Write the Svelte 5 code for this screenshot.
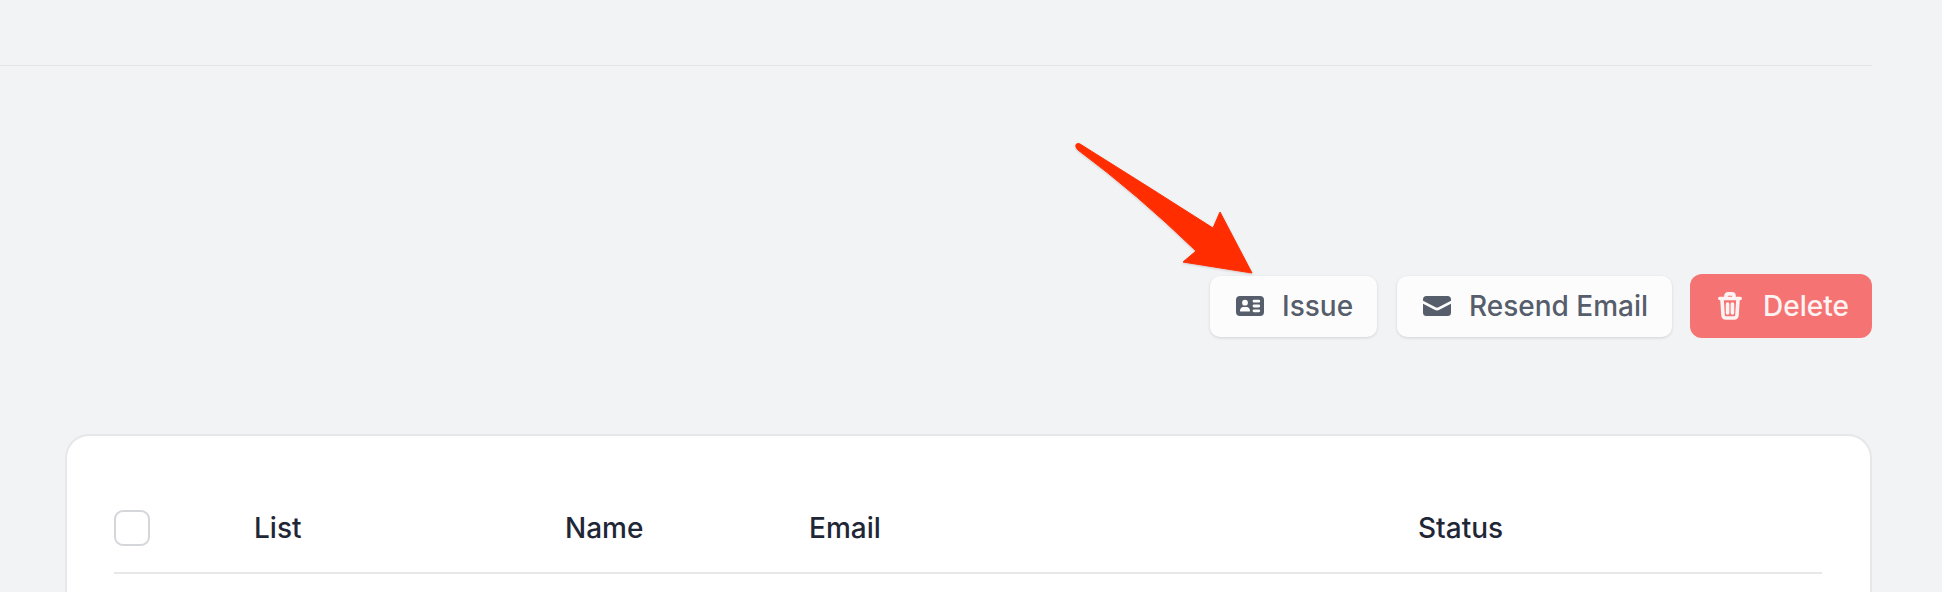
<script>
  const columns = [
    { label: 'List', width: 311 },
    { label: 'Name', width: 244 },
    { label: 'Email', width: 609 },
    { label: 'Status', width: 0 }
  ];
</script>

<div class="page">
  <div class="topbar"></div>

  <div class="actions">
    <button class="btn light issue">
      <svg class="icon" width="28" height="20" viewBox="0 0 28 20" aria-hidden="true">
        <path fill-rule="evenodd" fill="currentColor" d="M4 0h20a4 4 0 0 1 4 4v12a4 4 0 0 1-4 4H4a4 4 0 0 1-4-4V4a4 4 0 0 1 4-4zM9 3.800a2.900 2.900 0 1 0 0 5.800 2.900 2.900 0 0 0 0-5.800zM4.800 15.400h8.400c.6 0 .9-.4.800-1-.3-2-1.500-3.400-3.200-3.400H7.200c-1.700 0-2.900 1.400-3.200 3.400-.1.6.2 1 .8 1zM18 3.800a1.300 1.300 0 0 0 0 2.800h4.800a1.300 1.300 0 0 0 0-2.800zM18 8.600a1.400 1.400 0 0 0 0 2.800h4.800a1.400 1.400 0 0 0 0-2.800zM18 13.400a1.400 1.400 0 0 0 0 2.800h4.800a1.400 1.400 0 0 0 0-2.800z"/>
      </svg>
      <span>Issue</span>
    </button>
    <button class="btn light resend">
      <svg class="icon" width="28" height="20" viewBox="0 0 28 20" aria-hidden="true">
        <path fill="currentColor" d="M3.500 0h21A3.500 3.500 0 0 1 28 3.500v1.200L15.400 11.300a3 3 0 0 1-2.800 0L0 4.700V3.500A3.500 3.500 0 0 1 3.500 0z"/>
        <path fill="currentColor" d="M0 7.700l11.600 6.100a5 5 0 0 0 4.800 0L28 7.700v8.800a3.500 3.500 0 0 1-3.500 3.500h-21A3.500 3.500 0 0 1 0 16.500z"/>
      </svg>
      <span>Resend Email</span>
    </button>
    <button class="btn danger">
      <svg class="icon" width="24" height="28" viewBox="0 0 24 28" aria-hidden="true">
        <path fill="none" stroke="currentColor" stroke-width="3.600" stroke-linecap="round" stroke-linejoin="round" d="M1.800 6.500h20.400M8 6V3.800C8 2.700 8.900 1.900 10 1.900h4c1.100 0 2 .8 2 1.900V6M4 7l1 16c.1 1.600 1.200 3 2.900 3h8.200c1.700 0 2.800-1.400 2.900-3L20 7M9.600 12v9M14.400 12v9"/>
      </svg>
      <span>Delete</span>
    </button>
  </div>

  <div class="card">
    <div class="row">
      <span class="checkbox"></span>
      {#each columns as col}
        <span class="th" style:width={col.width ? col.width + 'px' : null}>{col.label}</span>
      {/each}
    </div>
  </div>

  <svg class="arrow" width="190" height="140" viewBox="1070 140 190 140" aria-hidden="true">
    <path fill="#ff2d00" stroke="#ff2d00" stroke-width="1" stroke-linejoin="round" d="M1080 144 L1150 188 L1213 228 L1220 212 L1252 273 L1183 262 L1196 251 Q1136 193 1078 150 C1074 146 1076 142 1080 144 Z"/>
  </svg>
</div>

<style>
  :global(body) {
    margin: 0;
    background: #f2f3f5;
  }

  .page {
    position: relative;
    height: 592px;
    overflow: hidden;
    font-family: Inter, "Liberation Sans", sans-serif;
  }

  .topbar {
    width: 1872px;
    height: 65px;
    border-bottom: 1px solid #e3e4e7;
  }

  .actions {
    display: flex;
    align-items: center;
    justify-content: flex-end;
    gap: 18px;
    width: 1872px;
    margin-top: 208px;
  }

  .btn {
    display: inline-flex;
    align-items: center;
    font: 450 28px/32px Inter, "Liberation Sans", sans-serif;
    border: 0;
    border-radius: 10px;
    padding: 0 20px 0 26px;
    gap: 18px;
    height: 61px;
    margin: 0;
    white-space: nowrap;
  }

  .light {
    background: #fcfcfd;
    color: #565d6b;
    box-shadow: 0 1px 3px rgba(17, 24, 39, 0.14);
  }

  .issue { width: 167px; }
  .resend { width: 275px; margin-left: 2px; }

  .danger {
    background: #f57373;
    color: #fdf3f3;
    height: 64px;
    width: 182px;
    border-radius: 12px;
    padding-left: 28px;
    gap: 21px;
  }

  .icon { flex: none; }

  .card {
    box-sizing: border-box;
    width: 1807px;
    height: 201px;
    margin: 96px 0 0 65px;
    padding: 0 47px;
    background: #fff;
    border: 2px solid #e6e7e9;
    border-bottom: 0;
    border-radius: 24px 24px 0 0;
  }

  .row {
    display: flex;
    align-items: center;
    width: 1708px;
    height: 138px;
    border-bottom: 2px solid #e7e8ea;
    box-sizing: border-box;
    padding-top: 48px;
  }

  .checkbox {
    box-sizing: border-box;
    flex: none;
    width: 36px;
    height: 36px;
    margin-right: 104px;
    border: 2px solid #d4d6da;
    border-radius: 9px;
    background: #fff;
  }

  .th {
    flex: none;
    font-size: 28px;
    line-height: 32px;
    font-weight: 500;
    color: #1f2737;
  }

  .arrow {
    position: absolute;
    left: 1070px;
    top: 140px;
    filter: drop-shadow(0 1px 1px rgba(80, 40, 30, 0.2));
  }
</style>
